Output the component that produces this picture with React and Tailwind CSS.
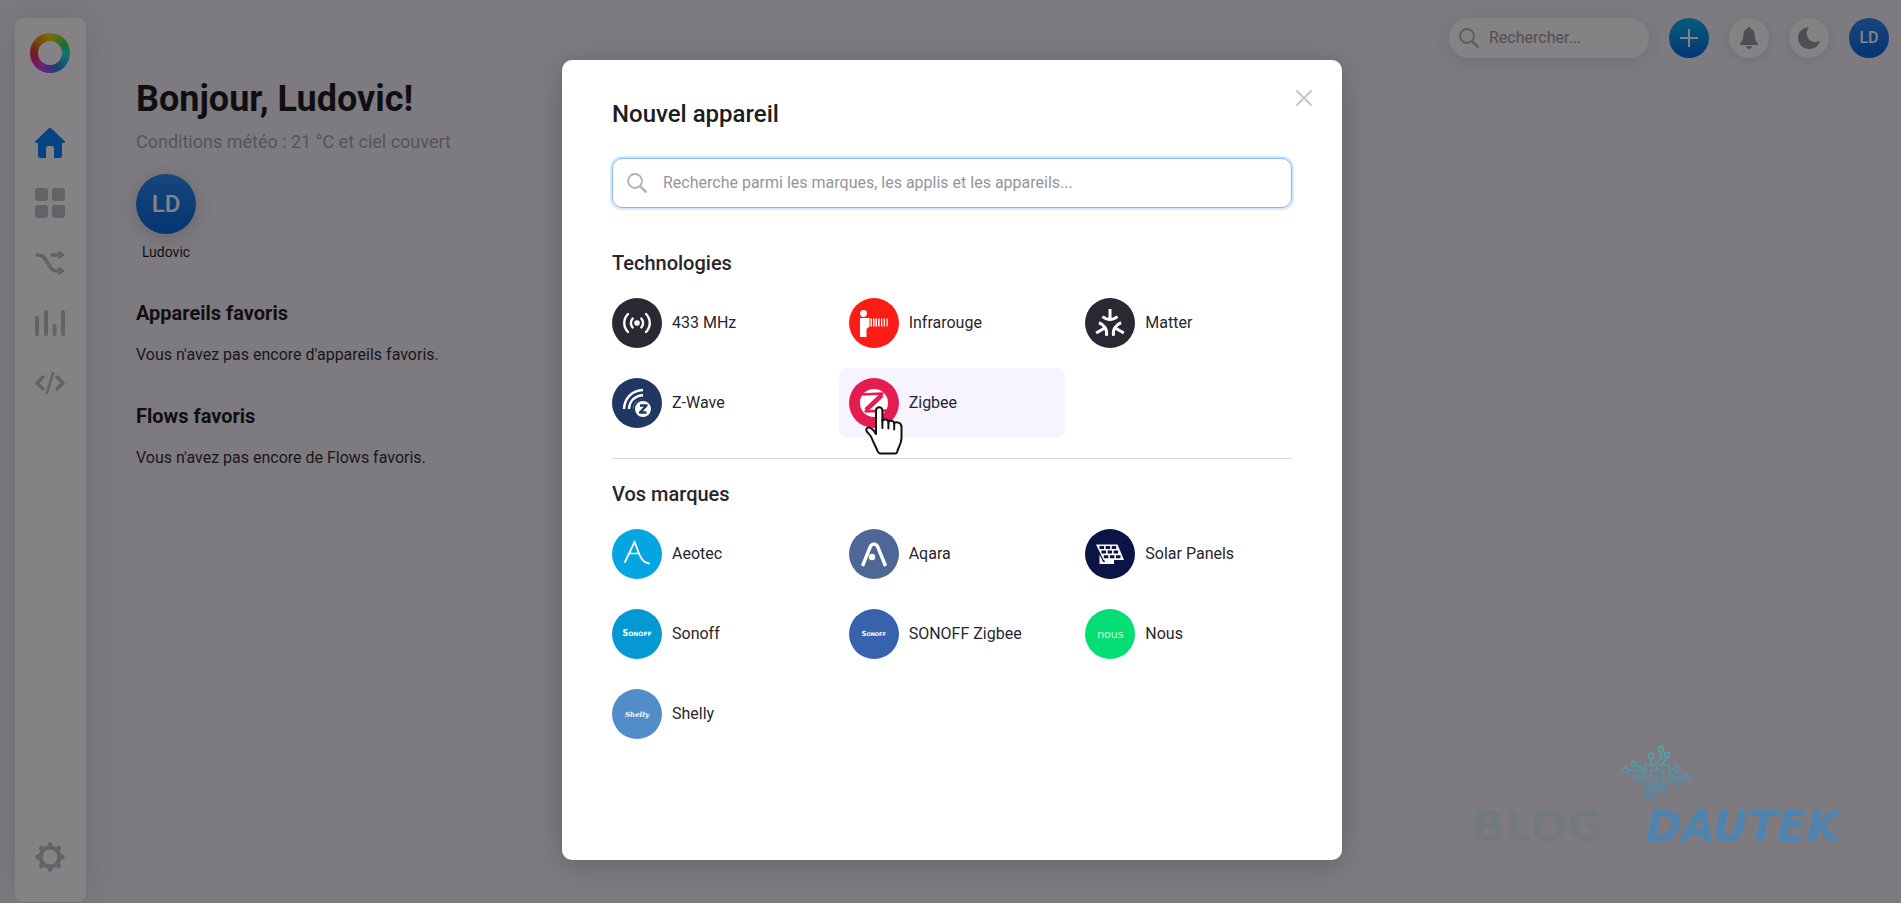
import { useState } from "react";
import clsx from "clsx";

// ---------------- Shared bits ----------------
const SearchIcon = ({ className }) => (
  <svg viewBox="0 0 20 20" className={className} fill="none" stroke="currentColor" strokeLinecap="round">
    <circle cx="8" cy="8" r="7" strokeWidth="1.8" />
    <path d="M13.6 13.6 18.6 18.6" strokeWidth="2.6" />
  </svg>
);

const navItems = [
  {
    label: "Accueil",
    active: true,
    icon: (
      <path
        fill="currentColor"
        d="M13.6.6a2 2 0 0 1 2.8 0L29.5 12.9c.9.9.4 2.1-.8 2.1H27v12.5a2.5 2.5 0 0 1-2.5 2.5H19v-9.500c0-1.400-.8-2.500-2.200-2.500h-3.600c-1.400 0-2.200 1.100-2.200 2.500V30H5.500A2.500 2.500 0 0 1 3 27.500V15H1.300c-1.200 0-1.700-1.200-.8-2.100z"
      />
    ),
  },
  {
    label: "Appareils",
    icon: (
      <g fill="currentColor">
        <rect width="13" height="13" rx="3" />
        <rect x="17" width="13" height="13" rx="3" />
        <rect y="17" width="13" height="13" rx="3" />
        <rect x="17" y="17" width="13" height="13" rx="3" />
      </g>
    ),
  },
  {
    label: "Flows",
    icon: (
      <g fill="none" stroke="currentColor" strokeWidth="3.6" strokeLinecap="round">
        <path d="M2 7h2c9 0 8 16 18 16h2" />
        <path d="M17 7h8" />
        <path fill="currentColor" strokeWidth="1.5" strokeLinejoin="round" d="M24 3.500 29 7l-5 3.500zM24 19.500 29 23l-5 3.500z" />
      </g>
    ),
  },
  {
    label: "Insights",
    icon: (
      <g stroke="currentColor" strokeWidth="4" strokeLinecap="round">
        <path d="M2 10v16M11 4v22M19.500 18v8M28 4v22" />
      </g>
    ),
  },
  {
    label: "Script",
    icon: (
      <g fill="none" stroke="currentColor" strokeWidth="3.4" strokeLinecap="round" strokeLinejoin="round">
        <path d="M8 9 2 15l6 6M22 9l6 6-6 6" />
        <path strokeWidth="2.6" d="M18 5 12 25" />
      </g>
    ),
  },
];

// ---------------- App logos ----------------
const logos = {
  rf: (
    <g fill="none" stroke="#fff" strokeWidth="2.4" strokeLinecap="round">
      <circle cx="25" cy="25" r="2.8" fill="#fff" stroke="none" />
      <path d="M20.700 20.500a6.500 6.500 0 0 0 0 9M29.300 20.500a6.500 6.500 0 0 1 0 9M16 16c-5 5-5 13 0 18M34 16c5 5 5 13 0 18" />
    </g>
  ),
  infrared: (
    <g fill="#fff">
      <circle cx="14.500" cy="15.500" r="3.400" />
      <path d="M11 20h9.500v8.500L17.500 31v8H11z" />
      <path d="M21.500 20.500h1.500v8h-1.500zM24 20.500h1.500v8H24zM26.500 20.500H28v8h-1.500zM29.200 20.500h1.400v8h-1.400zM32 20.500h1.300v8H32zM34.700 20.500h1.200v8h-1.200zM37.500 20.500h1.200v8h-1.200z" />
    </g>
  ),
  matter: (
    <g fill="none" stroke="#fff" strokeWidth="3">
      <path d="M25 11v10M17.500 18.500c4.500 4 10.500 4 15 0" />
      <path d="M25 11v10M17.500 18.500c4.500 4 10.500 4 15 0" transform="rotate(120 25 27)" />
      <path d="M25 11v10M17.500 18.500c4.500 4 10.500 4 15 0" transform="rotate(240 25 27)" />
    </g>
  ),
  zwave: (
    <g fill="none" stroke="#fff" strokeWidth="2.4">
      <path d="M12 31C12.500 20 20 12.500 31 12M17 31C17.500 23 23 17.500 31 17.200M22 31c.5-5 4-8 9-8.500" />
      <circle cx="31" cy="31" r="9" fill="#fff" stroke="#213763" strokeWidth="2" />
      <path stroke="#213763" strokeWidth="2.400" strokeLinejoin="round" d="M28 27.500h6.500l-6.500 7h6.500" />
    </g>
  ),
  zigbee: (
    <g>
      <circle cx="25" cy="25" r="14" fill="#fff" />
      <path fill="none" stroke="#e51c4f" strokeWidth="2.400" strokeLinejoin="round" d="M13.500 16.500 33.500 15.500 16.500 33.500 37 32.500" />
      <path fill="none" stroke="#e51c4f" strokeWidth="4.500" d="M33 17 17 32" />
    </g>
  ),
  aeotec: (
    <g fill="none" stroke="#fff" strokeLinecap="round">
      <path strokeWidth="1.800" d="M13 33 22.500 13C26 20 28 34 37 34.500" />
      <path strokeWidth="1.300" d="M17.500 24.500h9.500" />
    </g>
  ),
  aqara: (
    <g fill="none" stroke="#fff" strokeWidth="3.400">
      <path d="M13.500 37 21 18.500c1.500-4.500 6.500-4.500 8 0L36.500 37" />
      <circle cx="23" cy="28" r="3.200" fill="#fff" stroke="none" />
    </g>
  ),
  solar: (
    <g>
      <path fill="#fff" d="M14.500 26v9H29v-4H20z" />
      <path fill="#0b1445" d="M10 15h3l7 18h-2z" />
      <path fill="#fff" d="M11 15.500h21.500L39 31H18.500z" />
      <path
        fill="none"
        stroke="#0b1445"
        strokeWidth="3"
        strokeDasharray="4.500 1.600"
        d="M14.500 18.500h17M16.500 23h17M18.800 27.800h17"
      />
    </g>
  ),
};

const wordmark = (text, className) => (
  <span aria-hidden="true" className={clsx("leading-none text-white", className)}>{text}</span>
);

const technologies = [
  { name: "433 MHz", bg: "bg-[#2b2833]", logo: logos.rf },
  { name: "Infrarouge", bg: "bg-[#fb1c16]", logo: logos.infrared },
  { name: "Matter", bg: "bg-[#2b2833]", logo: logos.matter },
  { name: "Z-Wave", bg: "bg-[#213763]", logo: logos.zwave },
  { name: "Zigbee", bg: "bg-[#e51c4f]", logo: logos.zigbee, hovered: true },
];

const brands = [
  { name: "Aeotec", bg: "bg-[#05a5e1]", logo: logos.aeotec },
  { name: "Aqara", bg: "bg-[#4f6796]", logo: logos.aqara },
  { name: "Solar Panels", bg: "bg-[#0b1445]", logo: logos.solar },
  { name: "Sonoff", bg: "bg-[#0499d2]", word: wordmark("Sonoff", "font-['DejaVu_Sans'] text-[8px] font-bold [font-variant:small-caps]") },
  { name: "SONOFF Zigbee", bg: "bg-[#3663ac]", word: wordmark("Sonoff", "font-['DejaVu_Sans'] text-[7px] font-bold [font-variant:small-caps]") },
  { name: "Nous", bg: "bg-[#05de74]", word: wordmark("nous", "font-['DejaVu_Sans'] text-[11px] opacity-80") },
  { name: "Shelly", bg: "bg-[#528dca]", word: wordmark("Shelly", "font-['DejaVu_Serif'] text-[7px] font-bold italic") },
];

const HandCursor = () => (
  <svg viewBox="0 0 38 49" className="pointer-events-none absolute left-[26px] top-[38px] z-10 h-[49px] w-[38px]">
    <path
      fill="#fff"
      stroke="#111"
      strokeWidth="2"
      strokeLinejoin="round"
      d="M11 28V4.500a3.200 3.200 0 0 1 6.400 0V15c1-2.200 5.400-2 6 .8 1.300-1.600 5-1.300 5.800 1.200 1.600-1.400 7.300-.8 7.300 4V32c0 6-3 8.500-4.200 13.500-.3 1.500-.8 2-2 2H15.500c-1.500 0-2.200-.8-2.800-2.200C10.500 40 8 36 6.500 31.500 5.600 28.500 1 26.500 1.200 23.500c.3-2 3-2.500 5-1.200 2 1.200 3.300 2.700 4.800 5.700z"
    />
    <path fill="none" stroke="#111" strokeWidth="2" strokeLinecap="round" d="M17.400 14v8M23.400 16v6.500M29.200 17.500v6" />
  </svg>
);

const AppTile = ({ app }) => (
  <div className="relative">
    <button
      type="button"
      className={clsx(
        "flex w-full items-center gap-[10px] rounded-lg p-[10px] text-left hover:bg-[#f7f3ff]",
        app.hovered && "bg-[#f7f3ff]"
      )}
    >
      <span className={clsx("grid size-[50px] shrink-0 place-items-center rounded-full", app.bg)}>
        {app.logo ? <svg viewBox="0 0 50 50" className="size-[50px]">{app.logo}</svg> : app.word}
      </span>
      <span className="text-base">{app.name}</span>
    </button>
    {app.hovered && <HandCursor />}
  </div>
);

const AppGrid = ({ apps }) => (
  <div className="-mx-[10px] grid grid-cols-3 gap-[10px]">
    {apps.map((app) => (
      <AppTile key={app.name} app={app} />
    ))}
  </div>
);

// ---------------- Page ----------------
const Sidebar = () => (
  <nav className="flex w-[71px] shrink-0 flex-col items-center rounded-lg bg-white pb-[30px] pr-px pt-[15px] shadow-[0_0_40px_rgba(60,50,90,0.18)]">
    <span className="grid size-10 place-items-center rounded-full bg-[conic-gradient(from_0deg,#e8d800,#2fd45a_60deg,#1fe0e0_95deg,#1f7fe8_150deg,#7d55e8_180deg,#d43ae8_215deg,#e0267a_250deg,#e03a2a_280deg,#f09010_320deg,#e8d800)]">
      <span className="size-6 rounded-full bg-white" />
    </span>
    <div className="mt-[55px] flex flex-col gap-[30px]">
      {navItems.map((item) => (
        <a key={item.label} href="#" aria-label={item.label} className={item.active ? "text-[#0082ff]" : "text-[#bfbdc4]"}>
          <svg viewBox="0 0 30 30" className="size-[30px]">{item.icon}</svg>
        </a>
      ))}
    </div>
    <a href="#" aria-label="Réglages" className="mt-auto text-[#bfbdc4]">
      <svg viewBox="0 0 30 30" className="size-[30px]" fill="none" stroke="currentColor">
        <circle cx="15" cy="15" r="9.500" strokeWidth="4" />
        <path
          strokeWidth="5"
          strokeLinecap="round"
          d="M15 2.800v1M15 26.200v1M2.800 15h1M26.200 15h1M6.400 6.400l.7.7M22.900 22.900l.7.7M6.400 23.600l.7-.7M22.900 7.100l.7-.7"
        />
      </svg>
    </a>
  </nav>
);

const TopBar = () => (
  <header className="flex items-center gap-5 self-start">
    <label className="flex h-10 w-[200px] items-center gap-[10px] rounded-full bg-white pl-[10px] shadow-[0_4px_20px_rgba(60,50,90,0.15)]">
      <SearchIcon className="size-5 shrink-0 text-[#b4b2b9]" />
      <input
        type="text"
        aria-label="Rechercher"
        placeholder="Rechercher..."
        className="w-full min-w-0 bg-transparent text-base outline-none placeholder:text-[#98969d]"
      />
    </label>
    <button type="button" aria-label="Ajouter" className="grid size-10 place-items-center rounded-full bg-linear-to-b from-[#0ab4e6] to-[#0064e6] text-white">
      <svg viewBox="0 0 20 20" className="size-5" stroke="currentColor" strokeWidth="2">
        <path d="M10 1v18M1 10h18" />
      </svg>
    </button>
    <button type="button" aria-label="Notifications" className="grid size-10 place-items-center rounded-full bg-white text-[#98969d] shadow-[0_2px_12px_rgba(60,50,90,0.15)]">
      <svg viewBox="0 0 20 22" className="h-[22px] w-5" fill="currentColor">
        <path d="M10 0c1 0 1.400.7 1.500 1.500C14.500 2.300 15.500 5 15.700 8c.2 4 .8 6 3 8.200.7.800.3 1.800-.7 1.800H2c-1 0-1.400-1-.7-1.800 2.200-2.200 2.800-4.200 3-8.200.2-3 1.200-5.700 4.200-6.500C8.600.7 9 0 10 0zM7 19.200h6C12.600 21 11.500 21.800 10 21.800S7.400 21 7 19.200z" />
      </svg>
    </button>
    <button type="button" aria-label="Mode sombre" className="grid size-10 place-items-center rounded-full bg-white text-[#98969d] shadow-[0_2px_12px_rgba(60,50,90,0.15)]">
      <svg viewBox="0 0 22 22" className="size-[22px]" fill="currentColor">
        <path d="M10 .3c.7-.1.900.5.5 1C6.500 6 9.500 14.500 16.500 15c1.800.1 3.200-.3 4.400-1 .6-.3 1.100.1.900.8A11 11 0 0 1 11 22 11 11 0 0 1 0 11C0 5.500 4 .9 10 .3z" />
      </svg>
    </button>
    <button type="button" className="grid size-10 place-items-center rounded-full bg-linear-to-b from-[#2387eb] to-[#0064dc] text-base font-medium text-white">
      LD
    </button>
  </header>
);

const FavoriteSection = ({ title, text }) => (
  <section>
    <h2 className="text-xl font-bold leading-7">{title}</h2>
    <p className="mt-4 text-base text-[#2d2b30]">{text}</p>
  </section>
);

const Home = () => (
  <main className="flex-1 pl-[50px] pt-[59px]">
    <h1 className="text-4xl font-bold leading-[44px]">Bonjour, Ludovic!</h1>
    <p className="mt-[7px] text-lg leading-7 text-[#a3a1a8]">Conditions météo : 21 °C et ciel couvert</p>
    <div className="mt-[18px] flex w-[60px] flex-col items-center">
      <span className="grid size-[60px] place-items-center rounded-full bg-linear-to-b from-[#2387eb] to-[#0064dc] text-2xl font-medium text-white shadow-[0_4px_20px_rgba(60,50,90,0.25)]">
        LD
      </span>
      <span className="mt-2 text-sm">Ludovic</span>
    </div>
    <div className="mt-[37px] flex flex-col gap-[35px]">
      <FavoriteSection title="Appareils favoris" text="Vous n'avez pas encore d'appareils favoris." />
      <FavoriteSection title="Flows favoris" text="Vous n'avez pas encore de Flows favoris." />
    </div>
  </main>
);

const NewDeviceDialog = () => {
  const [query, setQuery] = useState("");

  return (
    <div
      role="dialog"
      aria-modal="true"
      aria-labelledby="dialog-title"
      className="relative flex min-h-[800px] w-full max-w-[780px] flex-col rounded-[10px] bg-white px-[50px] pt-[38px] text-[#28262d] shadow-[0_5px_30px_rgba(0,0,0,0.2)]"
    >
      <button type="button" aria-label="Fermer" className="absolute right-[30px] top-[30px] text-[#c6c3cc]">
        <svg viewBox="0 0 16 16" className="size-4" stroke="currentColor" strokeWidth="1.800" strokeLinecap="round">
          <path d="M1 1l14 14M15 1L1 15" />
        </svg>
      </button>
      <h2 id="dialog-title" className="text-2xl font-medium leading-8 text-[#1e1c23]">Nouvel appareil</h2>
      <label className="mt-7 flex h-[50px] items-center gap-4 rounded-[10px] border border-[#8cb4f0] px-[14px] shadow-[0_0_0_2px_rgba(150,200,255,0.4)]">
        <SearchIcon className="size-5 shrink-0 text-[#b4b2b9]" />
        <input
          type="text"
          aria-label="Recherche"
          value={query}
          onChange={(e) => setQuery(e.target.value)}
          placeholder="Recherche parmi les marques, les applis et les appareils..."
          className="w-full min-w-0 bg-transparent text-base outline-none placeholder:text-[#96949b]"
        />
      </label>
      <h3 className="mb-[11px] mt-[41px] text-xl font-medium leading-7">Technologies</h3>
      <AppGrid apps={technologies} />
      <hr className="mt-5 border-[#dcdcdf]" />
      <h3 className="mb-[11px] mt-[21px] text-xl font-medium leading-7">Vos marques</h3>
      <AppGrid apps={brands} />
    </div>
  );
};

const Watermark = () => (
  <div className="pointer-events-none fixed bottom-[52px] right-[61px] z-20 flex w-[368px] flex-col items-center font-['DejaVu_Sans']">
    <svg viewBox="0 0 70 56" className="h-14 w-[70px]" fill="none" strokeWidth="1.600">
      <defs>
        <linearGradient id="chip" x1="0" y1="0" x2="0" y2="56" gradientUnits="userSpaceOnUse">
          <stop offset="0" stopColor="#4fa9a6" />
          <stop offset="1" stopColor="#4b84b5" />
        </linearGradient>
      </defs>
      <g stroke="url(#chip)">
        <path d="M24 20h24v19H24zM30 25h12v9H30zM36 20v5M36 34v6" />
        <circle cx="40" cy="4" r="2.600" />
        <circle cx="30" cy="11" r="2.600" />
        <circle cx="46" cy="10" r="2.600" />
        <circle cx="13" cy="19" r="2.600" />
        <circle cx="5" cy="25" r="2.600" />
        <circle cx="16" cy="33" r="2.600" />
        <circle cx="56" cy="24" r="2.600" />
        <circle cx="66" cy="32" r="2.600" />
        <circle cx="58" cy="37" r="2.600" />
        <circle cx="42" cy="45" r="2.600" />
        <circle cx="26" cy="47" r="2.600" />
        <circle cx="32" cy="52" r="2.600" />
        <path d="M40 7v6l-5 6M30 14v5M46 13l-5 6M16 20l8 6M8 25h8l8 4M19 33l5-2M48 26l5-2M48 30l8 2h7M48 33l7 3M32 40l-4 5M36 40l-3 9M39 39l2 4" />
      </g>
    </svg>
    <div className="flex w-full items-center justify-between text-[43px] font-bold leading-[50px]">
      <span className="text-[#737a7f]">BLOG</span>
      <span className="italic text-[#4f84b0]">DAUTEK</span>
    </div>
  </div>
);

export default function App() {
  return (
    <div className="relative min-h-screen overflow-hidden bg-[#f2f1f6] font-['Roboto',sans-serif] text-[#19171c]">
      <div className="flex min-h-screen pb-px pl-[15px] pr-3 pt-[18px]">
        <Sidebar />
        <Home />
        <TopBar />
      </div>
      <div className="absolute inset-0 flex items-start justify-center bg-[rgba(10,5,10,0.5)] pl-[3px] pt-[60px]">
        <NewDeviceDialog />
      </div>
      <Watermark />
    </div>
  );
}
